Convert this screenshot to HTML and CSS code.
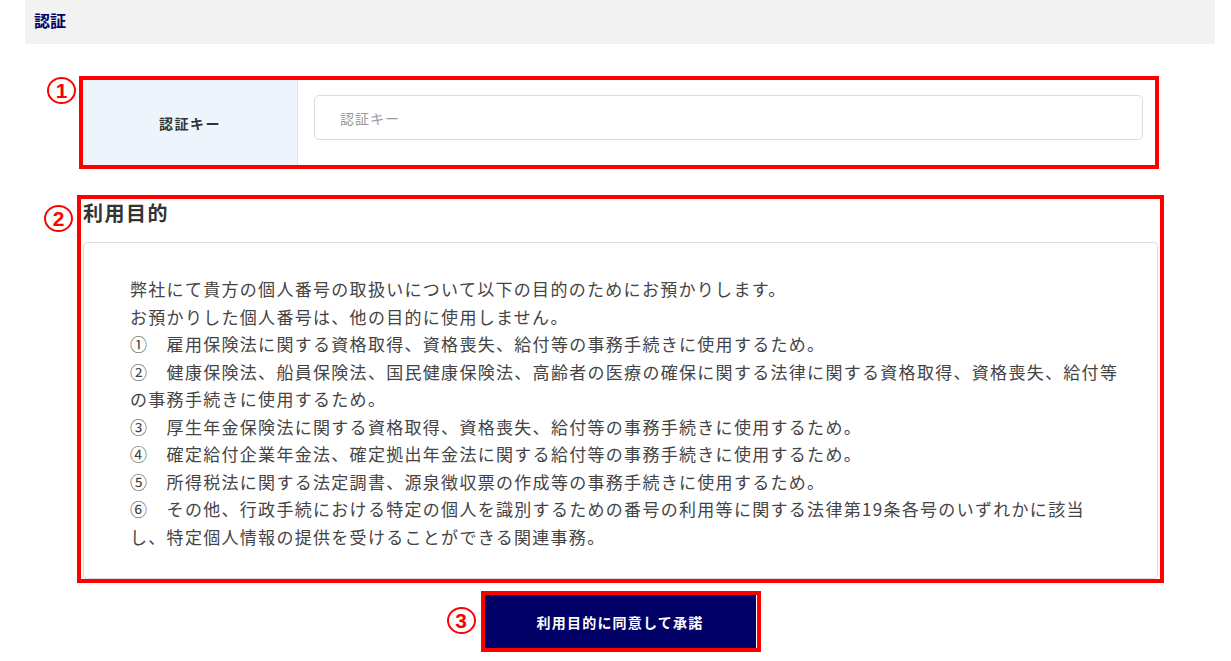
FILE: index.html
```html
<!DOCTYPE html>
<html lang="ja">
<head>
    <meta charset="UTF-8">
    <meta name="viewport" content="width=device-width, initial-scale=1.0">
    <title>認証</title>
    <link rel="stylesheet" href="styles.css">
</head>
<body>

    <div class="page-title">
        <h1>認証</h1>
    </div>

    <div class="content">

        <!-- 認証キー -->
        <div class="mark-box key-box">
            <span class="mark-num">1</span>
            <div class="key-row">
                <div class="key-label">認証キー</div>
                <div class="key-field">
                    <input type="text" class="key-input" placeholder="認証キー">
                </div>
            </div>
        </div>

        <!-- 利用目的 -->
        <div class="mark-box purpose-box">
            <span class="mark-num">2</span>
            <h2>利用目的</h2>
            <div class="purpose-panel">
                <p>
                    弊社にて貴方の個人番号の取扱いについて以下の目的のためにお預かりします。<br>
                    お預かりした個人番号は、他の目的に使用しません。<br>
                    ①　雇用保険法に関する資格取得、資格喪失、給付等の事務手続きに使用するため。<br>
                    ②　健康保険法、船員保険法、国民健康保険法、高齢者の医療の確保に関する法律に関する資格取得、資格喪失、給付等<br>
                    の事務手続きに使用するため。<br>
                    ③　厚生年金保険法に関する資格取得、資格喪失、給付等の事務手続きに使用するため。<br>
                    ④　確定給付企業年金法、確定拠出年金法に関する給付等の事務手続きに使用するため。<br>
                    ⑤　所得税法に関する法定調書、源泉徴収票の作成等の事務手続きに使用するため。<br>
                    ⑥　その他、行政手続における特定の個人を識別するための番号の利用等に関する法律第19条各号のいずれかに該当<br>
                    し、特定個人情報の提供を受けることができる関連事務。
                </p>
            </div>
        </div>

        <!-- 承諾ボタン -->
        <div class="mark-box button-box">
            <span class="mark-num">3</span>
            <button class="agree-btn">利用目的に同意して承諾</button>
        </div>

    </div>

</body>
</html>
```

FILE: styles.css
```css
/* Reset básico */
* {
    margin: 0;
    padding: 0;
    box-sizing: border-box;
}

body {
    font-family: "Noto Sans CJK JP", "Noto Sans", sans-serif;
    background-color: #ffffff;
    color: #333;
    width: 1231px;
}

/* Título */
.page-title {
    margin-left: 25px;
    width: 1190px;
    height: 44px;
    background-color: #f2f2f2;
    padding-left: 9px;
    display: flex;
    align-items: center;
}

.page-title h1 {
    font-size: 16px;
    font-weight: bold;
    color: #000066;
    line-height: 20px;
    margin-top: -4px;
}

.content {
    margin-left: 77px;
    width: 1087px;
}

/* Marcas vermelhas */
.mark-box {
    position: relative;
    border: 4px solid #ff0000;
}

.mark-num {
    position: absolute;
    width: 29px;
    height: 27px;
    border: 2px solid #ff0000;
    border-radius: 50%;
    color: #ff0000;
    font-family: "Liberation Sans", Arial, sans-serif;
    font-weight: bold;
    font-size: 21px;
    line-height: 23px;
    text-align: center;
}

/* Caixa 1 */
.key-box {
    margin-top: 32px;
    margin-left: 2px;
    width: 1080px;
    height: 93px;
}

.key-box .mark-num {
    left: -36px;
    top: -3px;
}

.key-row {
    display: flex;
    height: 100%;
}

.key-label {
    width: 215px;
    background-color: #edf4fc;
    border-right: 1px solid #dde3ea;
    display: flex;
    align-items: center;
    justify-content: center;
    font-size: 14px;
    letter-spacing: 1.5px;
    font-weight: bold;
    color: #333;
}

.key-field {
    flex: 1;
    padding: 15px 12px 0 16px;
}

.key-input {
    width: 100%;
    height: 45px;
    border: 1px solid #dcdcdc;
    border-radius: 5px;
    padding-left: 25px;
    font-family: "Noto Sans CJK JP", sans-serif;
    font-size: 14px;
    letter-spacing: 1px;
    color: #333;
    outline: none;
}

.key-input::placeholder {
    color: #999;
}

/* Caixa 2 */
.purpose-box {
    margin-top: 26px;
    height: 388px;
    padding: 0 2px 0 2px;
    display: flex;
    flex-direction: column;
}

.purpose-box .mark-num {
    left: -37px;
    top: 6px;
}

.purpose-box h2 {
    font-size: 20px;
    font-weight: bold;
    letter-spacing: 1.5px;
    line-height: 28px;
    color: #333;
}

.purpose-panel {
    flex: 1;
    margin-top: 15px;
    border: 1px solid #dddddd;
    border-radius: 4px;
    padding: 32px 10px 0 46px;
}

.purpose-panel p {
    font-size: 17px;
    letter-spacing: 1.3px;
    line-height: 27.5px;
    color: #444;
    white-space: nowrap;
}

/* Botão */
.button-box {
    margin: 8px auto 0;
    width: 280px;
    height: 61px;
}

.button-box .mark-num {
    left: -38px;
    top: 12px;
}

.agree-btn {
    display: block;
    width: 271px;
    height: 53px;
    background-color: #000066;
    color: #ffffff;
    border: none;
    font-family: "Noto Sans CJK JP", sans-serif;
    font-size: 14px;
    letter-spacing: 1.2px;
    font-weight: bold;
    cursor: pointer;
}
```
